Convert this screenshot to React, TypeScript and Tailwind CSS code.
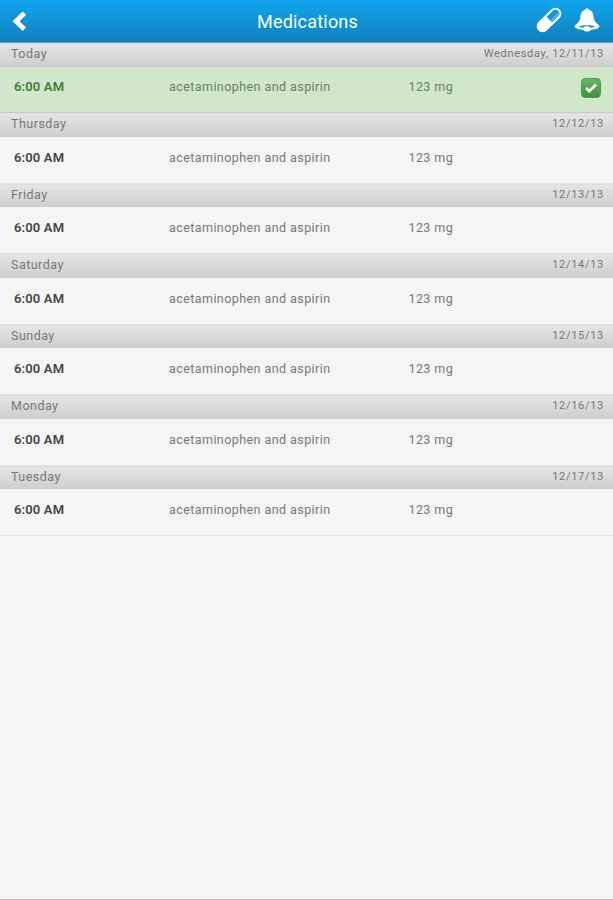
const days = [
  { id: 1, name: "Today", date: "Wednesday, 12/11/13", taken: true },
  { id: 2, name: "Thursday", date: "12/12/13", taken: false },
  { id: 3, name: "Friday", date: "12/13/13", taken: false },
  { id: 4, name: "Saturday", date: "12/14/13", taken: false },
  { id: 5, name: "Sunday", date: "12/15/13", taken: false },
  { id: 6, name: "Monday", date: "12/16/13", taken: false },
  { id: 7, name: "Tuesday", date: "12/17/13", taken: false },
];

function BackIcon() {
  return (
    <svg className="w-[16px] h-[22px]" viewBox="0 0 16 22" fill="none">
      <path d="M12.4 3.2 4 11.2l8.4 8" stroke="#fff" strokeWidth="4.8" />
    </svg>
  );
}

function PillIcon() {
  return (
    <svg className="w-[30px] h-[30px]" viewBox="0 0 30 30">
      <g transform="rotate(-45 15 15)">
        <rect x="0" y="9" width="30" height="12" rx="6" fill="#fff" />
        <path d="M15.5 11.2h8.7a3.8 3.8 0 0 1 0 7.6h-8.7z" fill="#1698dc" />
        <path d="M15.5 16h12.3a3.8 3.8 0 0 1-3.6 2.8h-8.7z" fill="#4fb1e4" />
      </g>
    </svg>
  );
}

function BellIcon() {
  return (
    <svg className="w-[26px] h-[24px]" viewBox="0 0 26 24">
      <path
        d="M13 .5c-1.3 0-2.1.7-2.3 1.6C7.8 3 6.6 5.500 6.400 8.800 6.200 12.200 4.800 14.200 2.200 16.200 1.200 17 .6 17.700.6 18.600c0 1.900 4.800 3 8.800 3.300.6 1 2 1.600 3.600 1.600s3-.6 3.600-1.600c4-.3 8.800-1.400 8.800-3.300 0-.9-.6-1.600-1.600-2.400-2.600-2-4-4-4.200-7.400C19.400 5.500 18.200 3 15.300 2.100 15.100 1.200 14.300.5 13 .5z"
        fill="#fff"
      />
      <path
        d="M4.500 18.500c2.500-1 5.300-1.300 8.500-1.300s6 .3 8.500 1.300c-1.500.7-3 1.100-4.800 1.300-.6-.9-1.900-1.500-3.700-1.500s-3.100.6-3.700 1.500c-1.800-.2-3.300-.6-4.800-1.300z"
        fill="#168dca"
      />
    </svg>
  );
}

function CheckBadge() {
  return (
    <div className="w-[20px] h-[20px] rounded-[4px] bg-linear-to-b from-[#65b75d] to-[#43933d] border border-[#519d49] flex items-center justify-center">
      <svg className="w-[14px] h-[12px]" viewBox="0 0 14 12" fill="none">
        <path d="m2 6 3.3 3.2L12 2.5" stroke="#fff" strokeWidth="2.7" />
      </svg>
    </div>
  );
}

function DaySection({ day }: { day: (typeof days)[number] }) {
  return (
    <section className="h-[70.45px] flex flex-col">
      <div className="h-[23.5px] shrink-0 flex items-center justify-between pl-[11px] pr-[9px] pb-[2.5px] bg-linear-to-b from-[#e5e5e5] to-[#cecece] border-t border-[#dedede] text-[#777777]">
        <h2 className="text-[12.5px] leading-[20px] tracking-[0.48px]">{day.name}</h2>
        <p className="text-[11px] leading-[20px] tracking-[0.7px]">{day.date}</p>
      </div>
      <div
        className={`flex-1 grid grid-cols-[155px_239.5px_1fr_auto] items-center pl-[14px] pr-[12.5px] pb-[5.2px] border-b text-[12.5px] leading-[19px] ${
          day.taken
            ? "bg-[#d1e7cc] border-[#bdd2b8] text-[#668060]"
            : "bg-[#f5f5f5] border-[#e4e4e4] text-[#777777]"
        }`}
      >
        <p className={`font-semibold text-[13px] tracking-[0.15px] ${day.taken ? "text-[#417b32]" : "text-[#444444]"}`}>6:00 AM</p>
        <p className="tracking-[0.43px]">acetaminophen and aspirin</p>
        <p className="tracking-[0.4px]">123 mg</p>
        {day.taken && (
          <div className="-mb-[3px]">
            <CheckBadge />
          </div>
        )}
      </div>
    </section>
  );
}

export default function App() {
  return (
    <main className="h-screen flex flex-col bg-[#f5f5f5] border-b border-[#b9b9b9] overflow-hidden font-['Roboto',sans-serif]">
      <header className="h-[43px] shrink-0 grid grid-cols-[1fr_auto_1fr] items-center pl-[12px] pr-[12px] bg-linear-to-b from-[#10a6ef] to-[#1080bc] border-b border-[#5f9fc4]">
        <BackIcon />
        <h1 className="pl-[2px] pt-[1px] text-[18px] leading-[24px] tracking-[0.2px] text-white">Medications</h1>
        <div className="flex items-center justify-end gap-[10px] pr-[1px] -mt-[2px]">
          <PillIcon />
          <BellIcon />
        </div>
      </header>
      {days.map((day) => (
        <DaySection key={day.id} day={day} />
      ))}
    </main>
  );
}
